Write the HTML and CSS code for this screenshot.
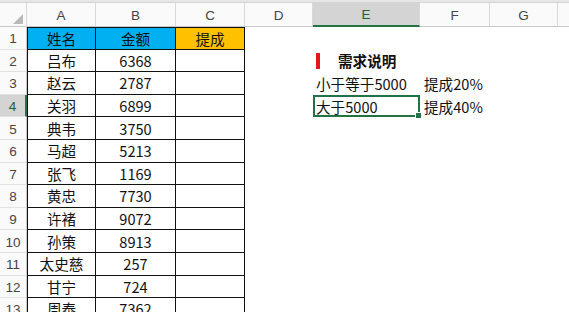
FILE: index.html
```html
<!DOCTYPE html>
<html lang="zh">
<head>
<meta charset="utf-8">
<link rel="stylesheet" href="styles.css">
</head>
<body>
<div class="topband"></div>
<div class="sheet">
  <div class="corner"><svg width="10" height="10" viewBox="0 0 10 10"><polygon points="10,0 10,10 0,10" fill="#b9b9b9"/></svg></div>
  <div class="ch">A</div><div class="ch">B</div><div class="ch">C</div><div class="ch">D</div>
  <div class="ch sel">E</div><div class="ch">F</div><div class="ch">G</div><div class="ch last"></div>

  <div class="rh">1</div><div class="c t first top blue">姓名</div><div class="c t top blue">金额</div><div class="c t top orange">提成</div><div class="c"></div><div class="c"></div><div class="c"></div><div class="c"></div><div class="c"></div>

  <div class="rh">2</div><div class="c t first">吕布</div><div class="c t">6368</div><div class="c t"></div><div class="c"></div>
  <div class="c e"><span class="title"><i class="bar"></i><b>需求说明</b></span></div><div class="c"></div><div class="c"></div><div class="c"></div>

  <div class="rh">3</div><div class="c t first">赵云</div><div class="c t">2787</div><div class="c t"></div><div class="c"></div>
  <div class="c e">小于等于5000</div><div class="c f">提成20%</div><div class="c"></div><div class="c"></div>

  <div class="rh rsel">4</div><div class="c t first">关羽</div><div class="c t">6899</div><div class="c t"></div><div class="c"></div>
  <div class="c e active">大于5000<i class="handle"></i></div><div class="c f">提成40%</div><div class="c"></div><div class="c"></div>

  <div class="rh">5</div><div class="c t first">典韦</div><div class="c t">3750</div><div class="c t"></div><div class="c"></div><div class="c"></div><div class="c"></div><div class="c"></div><div class="c"></div>
  <div class="rh">6</div><div class="c t first">马超</div><div class="c t">5213</div><div class="c t"></div><div class="c"></div><div class="c"></div><div class="c"></div><div class="c"></div><div class="c"></div>
  <div class="rh">7</div><div class="c t first">张飞</div><div class="c t">1169</div><div class="c t"></div><div class="c"></div><div class="c"></div><div class="c"></div><div class="c"></div><div class="c"></div>
  <div class="rh">8</div><div class="c t first">黄忠</div><div class="c t">7730</div><div class="c t"></div><div class="c"></div><div class="c"></div><div class="c"></div><div class="c"></div><div class="c"></div>
  <div class="rh">9</div><div class="c t first">许褚</div><div class="c t">9072</div><div class="c t"></div><div class="c"></div><div class="c"></div><div class="c"></div><div class="c"></div><div class="c"></div>
  <div class="rh">10</div><div class="c t first">孙策</div><div class="c t">8913</div><div class="c t"></div><div class="c"></div><div class="c"></div><div class="c"></div><div class="c"></div><div class="c"></div>
  <div class="rh">11</div><div class="c t first">太史慈</div><div class="c t">257</div><div class="c t"></div><div class="c"></div><div class="c"></div><div class="c"></div><div class="c"></div><div class="c"></div>
  <div class="rh">12</div><div class="c t first">甘宁</div><div class="c t">724</div><div class="c t"></div><div class="c"></div><div class="c"></div><div class="c"></div><div class="c"></div><div class="c"></div>
  <div class="rh">13</div><div class="c t first">周泰</div><div class="c t">7362</div><div class="c t"></div><div class="c"></div><div class="c"></div><div class="c"></div><div class="c"></div><div class="c"></div>
</div>
</body>
</html>
```
FILE: styles.css
```css
html, body {
  margin: 0;
  padding: 0;
  background: #fff;
  overflow: hidden;
}
.topband {
  height: 3px;
  background: #e6e6e6;
  border-bottom: 1px solid #d4d4d4;
  box-sizing: border-box;
}
.sheet {
  display: grid;
  grid-template-columns: 27px 69px 80px 69px 68px 107px 70px 68px 1fr;
  grid-template-rows: 24px repeat(13, 22.6px);
  width: 569px;
  font-family: "Noto Sans CJK SC", "Noto Sans", sans-serif;
  font-size: 14.6px;
  color: #111;
}
.corner {
  background: #fafafa;
  border-right: 1px solid #d8d8d8;
  border-bottom: 1px solid #c8c8c8;
  box-sizing: border-box;
  display: flex;
  align-items: flex-end;
  justify-content: flex-end;
  padding: 0 3px 2px 0;
}
.corner svg { display: block; }
.ch {
  background: #fafafa;
  border-right: 1px solid #d8d8d8;
  border-bottom: 1px solid #c8c8c8;
  box-sizing: border-box;
  display: flex;
  align-items: center;
  justify-content: center;
  font-family: "Liberation Sans", Arial, sans-serif;
  font-size: 13.5px;
  color: #444;
  padding-top: 1px;
}
.ch.last { border-right: none; }
.ch.sel {
  background: #d4d4d4;
  border-bottom: 2px solid #217346;
  color: #1e5e3a;
}
.rh {
  background: #fafafa;
  border-right: 1px solid #c8c8c8;
  border-bottom: 1px solid #e2e2e2;
  box-sizing: border-box;
  display: flex;
  align-items: center;
  justify-content: center;
  font-family: "Liberation Sans", Arial, sans-serif;
  font-size: 13.5px;
  color: #444;
  padding-top: 2px;
}
.rh.rsel {
  background: #d4d4d4;
  border-right: 2px solid #217346;
  color: #1e5e3a;
}
.c {
  box-sizing: border-box;
  display: flex;
  align-items: center;
  white-space: nowrap;
  position: relative;
  min-width: 0;
}
.c.t {
  justify-content: center;
  border-right: 1px solid #111;
  border-bottom: 1px solid #111;
}
.c.t.first { border-left: 1px solid #111; }
.c.t.top { border-top: 1px solid #111; }
.blue { background: #00b0f0; }
.orange { background: #ffc000; }
.c.e {
  padding-left: 3px;
  overflow: visible;
}
.c.f { padding-left: 4px; }
.title {
  display: flex;
  align-items: center;
}
.title b {
  font-weight: 700;
  margin-left: 18px;
}
.bar {
  display: block;
  width: 4px;
  height: 16px;
  background: #e8141c;
}
.c.active {
  border: 2px solid #217346;
  padding-left: 1px;
}
.handle {
  position: absolute;
  right: -4px;
  bottom: -4px;
  width: 5px;
  height: 5px;
  background: #217346;
  border: 1px solid #fff;
}
```
